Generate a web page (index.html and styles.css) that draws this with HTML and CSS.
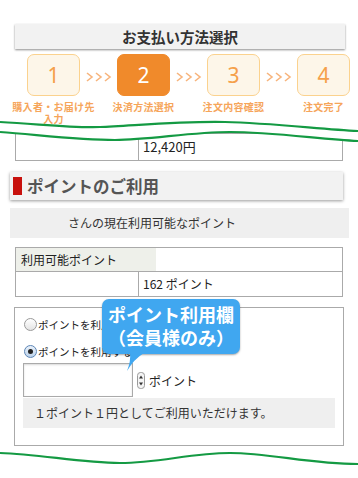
FILE: index.html
```html
<!DOCTYPE html>
<html lang="ja">
<head>
<meta charset="utf-8">
<title>お支払い方法選択</title>
<link rel="stylesheet" href="styles.css">
</head>
<body>
<div class="page">
  <header class="top">
    <h1 class="title">お支払い方法選択</h1>
    <ol class="steps">
      <li class="step"><span class="num">1</span><span class="label">購入者・お届け先<br>入力</span></li>
      <li class="arrow"><svg width="26" height="10" viewBox="0 0 26 10"><polyline points="1,1 6,5 1,9"/><polyline points="10,1 15,5 10,9"/><polyline points="19,1 24,5 19,9"/></svg></li>
      <li class="step current"><span class="num">2</span><span class="label">決済方法選択</span></li>
      <li class="arrow"><svg width="26" height="10" viewBox="0 0 26 10"><polyline points="1,1 6,5 1,9"/><polyline points="10,1 15,5 10,9"/><polyline points="19,1 24,5 19,9"/></svg></li>
      <li class="step"><span class="num">3</span><span class="label">注文内容確認</span></li>
      <li class="arrow"><svg width="26" height="10" viewBox="0 0 26 10"><polyline points="1,1 6,5 1,9"/><polyline points="10,1 15,5 10,9"/><polyline points="19,1 24,5 19,9"/></svg></li>
      <li class="step"><span class="num">4</span><span class="label">注文完了</span></li>
    </ol>
  </header>

  <div class="total-table">
    <div class="cell"></div>
    <div class="cell value">12,420円</div>
  </div>

  <h2 class="section">ポイントのご利用</h2>
  <p class="member-bar">さんの現在利用可能なポイント</p>

  <div class="points-table">
    <div class="prow1"><div class="ph">利用可能ポイント</div></div>
    <div class="prow2"><div class="cell"></div><div class="cell value">162 ポイント</div></div>
  </div>

  <div class="use-box">
    <div class="opt"><span class="radio"></span>ポイントを利用しない</div>
    <div class="opt"><span class="radio on"></span>ポイントを利用する</div>
    <div class="input-row">
      <span class="input"></span>
      <svg class="spin" width="8" height="17" viewBox="0 0 8 17"><rect x="0.5" y="0.5" width="7" height="16" rx="3" fill="#f4f4f4" stroke="#9a9a9a"/><polygon points="4,3.5 6,6.5 2,6.5" fill="#333"/><polygon points="4,13.5 6,10.5 2,10.5" fill="#333"/></svg>
      <span class="unit">ポイント</span>
    </div>
    <p class="note">１ポイント１円としてご利用いただけます。</p>
    <div class="tip">ポイント利用欄<br>（会員様のみ）<svg class="tail" width="24" height="20" viewBox="0 0 24 20"><path d="M8 0 L22 0 Q12 6 5 18 Q9 8 8 0 Z"/></svg></div>
  </div>

  <svg class="cut cut-top" width="358" height="32" viewBox="0 114 358 32">
    <path class="fill" d="M0,122 C40,124 70,128 100,127 C130,126 180,121 225,122 C270,123 320,129 358,131 L358,141 C320,139 270,132 230,132 C190,132 150,140 115,140 C80,140 40,135 0,132 Z"/>
    <path class="line" d="M0,122 C40,124 70,128 100,127 C130,126 180,121 225,122 C270,123 320,129 358,131"/>
    <path class="line" d="M0,132 C40,135 80,140 115,140 C150,140 190,132 230,132 C270,132 320,139 358,141"/>
  </svg>
  <svg class="cut cut-bottom" width="358" height="30" viewBox="0 448 358 30">
    <path class="fill" d="M0,453 C40,454 80,463 120,463 C160,463 190,453 230,453 C270,453 310,464 358,464 L358,478 L0,478 Z"/>
    <path class="line" d="M0,453 C40,454 80,463 120,463 C160,463 190,453 230,453 C270,453 310,464 358,464"/>
  </svg>
</div>
</body>
</html>
```

FILE: styles.css
```css
* {
  box-sizing: border-box;
  margin: 0;
  padding: 0;
}

body {
  margin: 0;
  background: #fff;
  font-family: "Noto Sans CJK JP", "Noto Sans", sans-serif;
  color: #222;
}

.page {
  position: relative;
  width: 358px;
  height: 478px;
  overflow: hidden;
}

.top {
  padding-top: 24px;
}

.title {
  margin: 0 13px 0 15px;
  height: 25px;
  background: #f2f2f2;
  box-shadow: 0 1px 2px rgba(0, 0, 0, 0.45);
  font-size: 14.5px;
  font-weight: 700;
  line-height: 25px;
  text-align: center;
  color: #333;
}

.steps {
  list-style: none;
  display: flex;
  align-items: flex-start;
  padding-left: 27px;
  margin-top: 5px;
  height: 70px;
}

.step {
  width: 53px;
  display: flex;
  flex-direction: column;
  align-items: center;
}

.num {
  width: 53px;
  height: 42px;
  border: 1.5px solid #fbd28e;
  background: #fdf6e9;
  border-radius: 7px;
  font-family: "Noto Sans", sans-serif;
  font-size: 21px;
  color: #f5a04a;
  display: flex;
  align-items: center;
  justify-content: center;
}

.current .num {
  background: #f08a2b;
  border-color: #f08a2b;
  color: #fff;
}

.label {
  margin-top: 5px;
  font-size: 10px;
  line-height: 11.5px;
  font-weight: 700;
  color: #f6a55a;
  white-space: nowrap;
  text-align: center;
  letter-spacing: 0.3px;
}

.arrow {
  width: 37px;
  height: 42px;
  display: flex;
  align-items: center;
  justify-content: center;
  padding-top: 4px;
}

.arrow svg polyline {
  fill: none;
  stroke: #f7b47c;
  stroke-width: 1.6;
}

.total-table {
  margin: 9px 15px 0 15px;
  display: grid;
  grid-template-columns: 122px 1fr;
  border: 1px solid #aaa;
  height: 28px;
}

.value {
  border-left: 1px solid #aaa;
  padding-left: 4px;
  font-size: 13px;
  line-height: 26px;
  color: #222;
}

.section {
  margin: 11px 15px 0 10px;
  height: 28px;
  background: #f2f2f2;
  box-shadow: 0 1px 3px rgba(0, 0, 0, 0.4);
  display: flex;
  align-items: center;
  gap: 5px;
  padding-left: 3px;
  font-size: 16.5px;
  font-weight: 700;
  color: #555;
}

.section::before {
  content: "";
  width: 9px;
  height: 18px;
  background: #c8110d;
}

.member-bar {
  margin: 8px 9px 0 10px;
  height: 30px;
  background: #efefef;
  padding-left: 58px;
  font-size: 12px;
  line-height: 30px;
  color: #333;
}

.points-table {
  margin: 9px 15px 0 15px;
  border: 1px solid #aaa;
}

.prow1 {
  display: flex;
  height: 24px;
  border-bottom: 1px solid #aaa;
}

.ph {
  width: 140px;
  background: #eef0ea;
  font-size: 12px;
  line-height: 23px;
  padding-left: 5px;
  color: #222;
}

.prow2 {
  display: grid;
  grid-template-columns: 122px 1fr;
  height: 24px;
}

.prow2 .value {
  font-size: 12px;
  line-height: 24px;
}

.use-box {
  position: relative;
  margin: 10px 14px 0 14px;
  border: 1px solid #aaa;
  padding: 10px 8px 17px 8px;
}

.opt {
  display: flex;
  align-items: center;
  gap: 1px;
  height: 13px;
  font-size: 10.5px;
  color: #222;
}

.opt + .opt {
  margin-top: 14px;
}

.radio {
  position: relative;
  width: 13px;
  height: 13px;
  margin-left: 1px;
  border: 1px solid #9a9a9a;
  border-radius: 50%;
  background: linear-gradient(#ffffff, #e4e4e4);
}

.radio.on {
  border-color: #5d86b6;
  background: linear-gradient(#eaf2fb, #bcd2ea);
}

.radio.on::after {
  content: "";
  position: absolute;
  left: 3px;
  top: 3px;
  width: 5px;
  height: 5px;
  border-radius: 50%;
  background: #222;
}

.input-row {
  margin-top: 5px;
  display: flex;
  align-items: center;
}

.input {
  width: 110px;
  height: 34px;
  border: 1px solid #aaa;
  background: #fff;
  box-shadow: inset 0 1px 2px rgba(0, 0, 0, 0.15);
}

.spin {
  margin-left: 4px;
}

.unit {
  margin-left: 4px;
  font-size: 12px;
  color: #222;
}

.note {
  margin-top: 1px;
  height: 30px;
  background: #efefef;
  padding-left: 11px;
  font-size: 12px;
  line-height: 30px;
  color: #333;
}

.tip {
  position: absolute;
  left: 87px;
  top: -9px;
  width: 138px;
  padding: 4px 0 5px;
  background: #40a7f0;
  border-radius: 7px;
  box-shadow: 0 1px 2px rgba(0, 0, 0, 0.35);
  color: #fff;
  font-size: 18px;
  font-weight: 700;
  line-height: 23px;
  text-align: center;
}

.tail {
  position: absolute;
  left: 20px;
  top: 54px;
}

.tail path {
  fill: #40a7f0;
}

.cut {
  position: absolute;
  left: 0;
}

.cut-top {
  top: 114px;
}

.cut-bottom {
  top: 448px;
}

.cut .fill {
  fill: #fff;
}

.cut .line {
  fill: none;
  stroke: #149a43;
  stroke-width: 2.2;
}
```
